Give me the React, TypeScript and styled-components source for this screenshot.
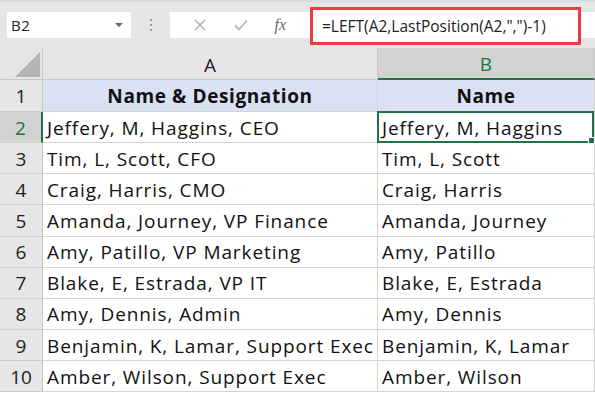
import React from "react";
import styled, { createGlobalStyle } from "styled-components";

const GREEN = "#217346";
const GRID = "#d4d4d4";
const FONT = `"Open Sans", "Noto Sans", "Liberation Sans", sans-serif`;

const Global = createGlobalStyle`
  html, body { margin: 0; padding: 0; background: #fff; overflow: hidden; }
  body { font-family: ${FONT}; }
`;

const Page = styled.div`
  width: 595px;
  height: 393px;
  display: flex;
  flex-direction: column;
  background: #fff;
  overflow: hidden;
`;

const Toolbar = styled.div`
  height: 48px;
  flex-shrink: 0;
  display: flex;
  align-items: center;
  padding-left: 7px;
  background: #e6e6e6;
  border-top: 2px solid #dcdcdc;
  box-sizing: border-box;
`;

const NameBox = styled.div`
  width: 124px;
  height: 26px;
  background: #fff;
  display: flex;
  align-items: center;
  justify-content: space-between;
  padding: 0 8px 0 4px;
  box-sizing: border-box;
  font-size: 15px;
  letter-spacing: 0.5px;
  color: #222;
`;

const Caret = styled.span`
  width: 0;
  height: 0;
  border-left: 4px solid transparent;
  border-right: 4px solid transparent;
  border-top: 4px solid #666;
`;

const Dots = styled.div`
  width: 39px;
  display: flex;
  flex-direction: column;
  align-items: center;
  gap: 3px;
`;

const Dot = styled.span`
  width: 2px;
  height: 2px;
  background: #a0a0a0;
`;

const FxButtons = styled.div`
  width: 135px;
  height: 26px;
  background: #fff;
  display: flex;
  align-items: center;
  justify-content: space-around;
  padding: 0 6px 0 10px;
  box-sizing: border-box;
`;

const FxLabel = styled.span`
  font-family: "Liberation Serif", "DejaVu Serif", serif;
  font-style: italic;
  font-size: 16px;
  color: #666;
`;

const FormulaField = styled.div`
  flex: 1;
  height: 26px;
  background: #fff;
  display: flex;
  align-items: center;
  padding-left: 5px;
`;

const Highlight = styled.div`
  width: 271px;
  height: 38px;
  flex-shrink: 0;
  border: 3px solid #ee3b3f;
  box-sizing: border-box;
  background: #fff;
  display: flex;
  align-items: center;
  padding-left: 9px;
  font-size: 15.5px;
  color: #222;
  margin-top: 2px;
  white-space: nowrap;
`;

const Sheet = styled.div`
  display: grid;
  grid-template-columns: 43px 335px 217px;
  grid-template-rows: 32px 32px repeat(9, 31.15px);
`;

const HeadCell = styled.div<{ $selected?: boolean }>`
  background: ${(p) => (p.$selected ? "#d2d2d2" : "#e6e6e6")};
  color: ${(p) => (p.$selected ? GREEN : "#222")};
  border-right: 1px solid #c8c8c8;
  border-bottom: ${(p) => (p.$selected ? `2px solid ${GREEN}` : "1px solid #c8c8c8")};
  box-sizing: border-box;
  display: flex;
  align-items: center;
  justify-content: center;
  font-size: 19px;
  padding-top: 2px;
`;

const Corner = styled.div`
  background: #e6e6e6;
  border-right: 1px solid #c8c8c8;
  border-bottom: 1px solid #c8c8c8;
  box-sizing: border-box;
  display: flex;
  align-items: flex-end;
  justify-content: flex-end;
  padding: 0 2px 2px 0;
`;

const Triangle = styled.span`
  width: 0;
  height: 0;
  border-left: 25px solid transparent;
  border-bottom: 25px solid #b4b4b4;
`;

const RowHead = styled.div<{ $selected?: boolean }>`
  background: ${(p) => (p.$selected ? "#d2d2d2" : "#e6e6e6")};
  color: ${(p) => (p.$selected ? GREEN : "#222")};
  border-right: ${(p) => (p.$selected ? `2px solid ${GREEN}` : "1px solid #c8c8c8")};
  border-bottom: 1px solid #d0d0d0;
  box-sizing: border-box;
  display: flex;
  align-items: center;
  justify-content: center;
  font-size: 19px;
  padding-top: 1px;
`;

const Cell = styled.div<{ $title?: boolean }>`
  position: relative;
  background: ${(p) => (p.$title ? "#d9e1f2" : "#fff")};
  border-right: 1px solid ${GRID};
  border-bottom: 1px solid ${GRID};
  box-sizing: border-box;
  display: flex;
  align-items: center;
  justify-content: ${(p) => (p.$title ? "center" : "flex-start")};
  padding: 1px 4px 0 4px;
  font-size: 19px;
  letter-spacing: ${(p) => (p.$title ? "0.6px" : "0.9px")};
  font-weight: ${(p) => (p.$title ? 700 : 400)};
  color: #111;
  white-space: nowrap;
  overflow: visible;
`;

const Selection = styled.div`
  position: absolute;
  inset: -1px 0 -1px -1px;
  border: 2px solid ${GREEN};
  pointer-events: none;
`;

const Handle = styled.span`
  position: absolute;
  right: -3px;
  bottom: -3px;
  width: 5px;
  height: 5px;
  background: ${GREEN};
  border: 1px solid #fff;
`;

const rows: [string, string][] = [
  ["Jeffery, M, Haggins, CEO", "Jeffery, M, Haggins"],
  ["Tim, L, Scott, CFO", "Tim, L, Scott"],
  ["Craig, Harris, CMO", "Craig, Harris"],
  ["Amanda, Journey, VP Finance", "Amanda, Journey"],
  ["Amy, Patillo, VP Marketing", "Amy, Patillo"],
  ["Blake, E, Estrada, VP IT", "Blake, E, Estrada"],
  ["Amy, Dennis, Admin", "Amy, Dennis"],
  ["Benjamin, K, Lamar, Support Exec", "Benjamin, K, Lamar"],
  ["Amber, Wilson, Support Exec", "Amber, Wilson"],
];

export default function App() {
  return (
    <>
      <Global />
      <Page>
        <Toolbar>
          <NameBox>
            <span>B2</span>
            <Caret />
          </NameBox>
          <Dots>
            <Dot />
            <Dot />
            <Dot />
          </Dots>
          <FxButtons>
            <svg width="14" height="14" viewBox="0 0 14 14">
              <path d="M2 2 L12 12 M12 2 L2 12" stroke="#b4b4b4" strokeWidth="1.6" fill="none" />
            </svg>
            <svg width="16" height="14" viewBox="0 0 16 14">
              <path d="M2 7.5 L6 11.5 L14 2.5" stroke="#b4b4b4" strokeWidth="1.8" fill="none" />
            </svg>
            <FxLabel>fx</FxLabel>
          </FxButtons>
          <FormulaField>
            <Highlight>=LEFT(A2,LastPosition(A2,",")-1)</Highlight>
          </FormulaField>
        </Toolbar>
        <Sheet>
          <Corner>
            <Triangle />
          </Corner>
          <HeadCell>A</HeadCell>
          <HeadCell $selected>B</HeadCell>

          <RowHead>1</RowHead>
          <Cell $title>Name &amp; Designation</Cell>
          <Cell $title>Name</Cell>

          {rows.map(([a, b], i) => (
            <React.Fragment key={i}>
              <RowHead $selected={i === 0}>{i + 2}</RowHead>
              <Cell>{a}</Cell>
              <Cell>
                {b}
                {i === 0 && (
                  <Selection>
                    <Handle />
                  </Selection>
                )}
              </Cell>
            </React.Fragment>
          ))}
        </Sheet>
      </Page>
    </>
  );
}
